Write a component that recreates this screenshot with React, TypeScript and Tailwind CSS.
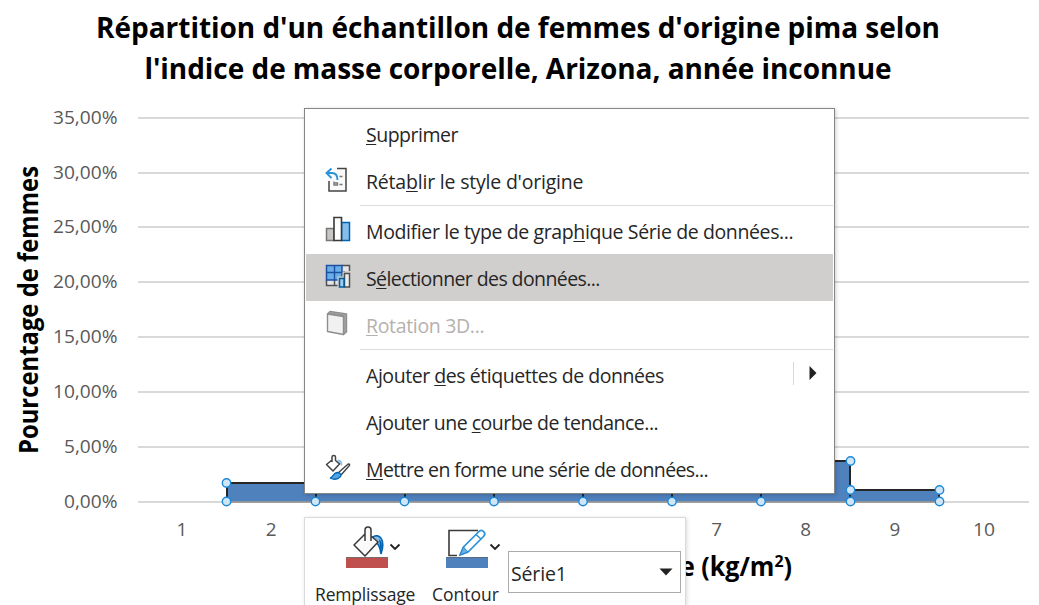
import React from "react";

const gridLines = [118, 173, 227, 282, 337, 392, 447, 502];
const percents = ["35,00%", "30,00%", "25,00%", "20,00%", "15,00%", "10,00%", "5,00%", "0,00%"];
const handles: [number, number][] = [
  [226.5, 483], [226.5, 501.5], [315.5, 501.5], [404.5, 501.5], [494, 501.5], [583, 501.5],
  [672, 501.5], [761, 501.5], [850.5, 461], [850.5, 490], [850.5, 501.5], [939.5, 490], [939.5, 501.5],
];

function Chart() {
  return (
    <svg className="block h-[515px] w-[1039px] font-['Open_Sans',sans-serif]" viewBox="0 90 1039 515">
      {gridLines.map((y) => (
        <path key={y} d={`M138 ${y}H1029`} stroke="#d9d9d9" strokeWidth="2" />
      ))}
      <g fill="#595959" fontSize="19">
        {percents.map((p, i) => (
          <text key={p} x={p.length === 6 ? 53 : 64} y={gridLines[i] + 6} textLength={p.length === 6 ? 64.5 : 53.5} lengthAdjust="spacingAndGlyphs">{p}</text>
        ))}
        {[1, 2, 3, 4, 5, 6, 7, 8, 9, 10].map((n) => (
          <text key={n} x={182 + (n - 1) * 89.1} y="536" textAnchor="middle" textLength={n === 10 ? 22 : 10.8} lengthAdjust="spacingAndGlyphs">{n}</text>
        ))}
      </g>
      <path d="M227 501.500V483H316V470H761V461H850V490H939V501.500Z" fill="#4f81bd" />
      <path d="M227 501V483H316V470H761V461H850V490H939V501M316 470V501M405 470V501M494 470V501M583 470V501M672 470V501M761 461V501M850 490V501" fill="none" stroke="#262626" strokeWidth="2" />
      <path d="M227 502H939" stroke="#8c8c8c" strokeWidth="1.500" />
      {handles.map(([x, y], i) => (
        <circle key={i} cx={x} cy={y} r="4.200" fill="#cfe6f8" stroke="#1e88d8" strokeWidth="1.400" />
      ))}
      <g fill="#000" fontWeight="700" fontSize="26">
        <text transform="translate(38 454) rotate(-90)" textLength="288" lengthAdjust="spacingAndGlyphs">Pourcentage de femmes</text>
        <text x="680" y="576" textLength="112" lengthAdjust="spacingAndGlyphs">e (kg/m<tspan dy="-9" fontSize="16.500">2</tspan><tspan dy="9">)</tspan></text>
      </g>
    </svg>
  );
}

function ResetIcon() {
  return (
    <svg className="-mt-[3px]" width="26" height="26" viewBox="0 0 26 26" fill="none">
      <path d="M11 3H21V25H4V15" fill="#fafafa" />
      <path d="M12 2.500H21V25H4V15" stroke="#444" strokeWidth="1.500" />
      <path d="M14.500 10.500H17.500M14.500 18.500H17.500" stroke="#777" strokeWidth="1.500" />
      <path d="M9 15.500V19H12.500V17H9" stroke="#777" strokeWidth="1.300" />
      <path d="M6.500 2.500L1.500 7L6.500 12M2 7H7C11 7 12.500 10 12.500 14" stroke="#2b91d9" strokeWidth="1.900" />
    </svg>
  );
}

function ColumnsIcon() {
  return (
    <svg width="26" height="26" viewBox="0 0 26 26">
      <path d="M1.500 12.500H9V24.500H1.500Z" fill="#c8c6c4" stroke="#797775" strokeWidth="1.500" />
      <path d="M16.500 6.500H24.500V24.500H16.500Z" fill="#83beec" stroke="#0063b1" strokeWidth="1.500" />
      <path d="M9 1.500H16.500V24.500H9Z" fill="#fff" stroke="#3b3a39" strokeWidth="1.600" />
    </svg>
  );
}

function SelectDataIcon() {
  return (
    <svg width="26" height="26" viewBox="0 0 26 26" fill="none">
      <path d="M1.500 17H17V22.500H1.500ZM17 2.500H24.500V8H17Z" fill="#e5e5e5" />
      <path d="M1.500 17V22.500H13M9.500 17V22.500M17 2.500H24.500V8M17 9H20" stroke="#505050" strokeWidth="1.500" />
      <path d="M1.500 2.500H17V17H1.500Z" fill="#69afe5" stroke="#1d4fa3" strokeWidth="1.500" />
      <path d="M9.500 2V17M1 9.500H17" stroke="#1d4fa3" strokeWidth="1.400" />
      <path d="M12.500 13.500H17.500V8.500H21V25H12.500Z" fill="#d0cfcd" />
      <path d="M19.500 10.500H24.500V24H19.500Z" fill="#eee" stroke="#505050" strokeWidth="1.500" />
      <path d="M14.500 15.500H19V24H14.500Z" fill="#9cccf1" stroke="#005b9e" strokeWidth="1.500" />
    </svg>
  );
}

function CubeIcon() {
  return (
    <svg width="26" height="26" viewBox="0 0 26 26" stroke="#8e8e8e" strokeWidth="1.400" strokeLinejoin="round">
      <path d="M2.500 4L5 1.500L21.500 4V22L18.500 24.500V6Z" fill="#bdbdbd" />
      <path d="M4 3L20 5V23" fill="none" stroke="#999" />
      <path d="M2.500 4L18.500 6.500V24.500L2.500 21.500Z" fill="#f1f1f1" />
    </svg>
  );
}

function FormatIcon() {
  return (
    <svg width="26" height="26" viewBox="0 0 26 26" fill="none">
      <path d="M12 6C16 5 18 8 17 12L14 9" fill="#8ec5ee" />
      <path d="M7 6L1.500 10.500L8 17L14.500 10L10.500 6.500V3C10.500 1 7 1 7 3V8" fill="#fff" stroke="#444" strokeWidth="1.500" strokeLinejoin="round" />
      <path d="M13 19L22 11C24 9 25.500 10.500 24 12L16 21" fill="#fff" stroke="#444" strokeWidth="1.400" />
      <path d="M5 24C8 24 8 19 12 18.500C16 18.500 17 21.500 14.500 23.500C12 25.500 8 25.500 5 24Z" fill="#53a5e2" stroke="#0063b1" strokeWidth="1.300" />
    </svg>
  );
}

function Item({ before = "", hot, after, icon, className = "text-[#262626]", tracking, arrow }: {
  before?: string; hot: string; after: string; icon?: React.ReactNode; className?: string; tracking: string; arrow?: boolean;
}) {
  return (
    <div className={`flex h-[47px] items-center pl-[19px] ${className}`}>
      <div className="-mt-[3px] mr-[15px] w-[26px] shrink-0">{icon}</div>
      <div className={`grow whitespace-pre text-[19.5px] ${tracking}`}>
        {before}<span className="underline decoration-1 underline-offset-[2px]">{hot}</span>{after}
      </div>
      {arrow && (
        <div className="-mt-[3px] flex h-[23px] w-[40px] items-center border-l border-[#d8d8d8] pl-[15px]">
          <svg width="8" height="14" viewBox="0 0 8 14"><path d="M0.500 0L7.500 7L0.500 14Z" fill="#222" /></svg>
        </div>
      )}
    </div>
  );
}

function ContextMenu() {
  return (
    <div className="absolute left-[304px] top-[108px] h-[386px] w-[531px] border border-[#858585] bg-white px-px pt-[2px] font-['Open_Sans',sans-serif] shadow-[1px_1px_4px_rgba(0,0,0,0.2)]">
      <Item hot="S" after="upprimer" tracking="pt-px tracking-[-0.5px]" />
      <Item before="Réta" hot="b" after="lir le style d'origine" icon={<ResetIcon />} tracking="pt-px tracking-[-0.2px]" />
      <div className="mb-px ml-[54px] h-px bg-[#dcdcdc]" />
      <Item before="Modifier le type de grap" hot="h" after="ique Série de données..." icon={<ColumnsIcon />} tracking="pt-[3px] tracking-[-0.38px]" />
      <Item before="S" hot="é" after="lectionner des données..." icon={<SelectDataIcon />} className="bg-[#d0cfcd] text-[#262626]" tracking="pt-[3px] tracking-[-0.59px]" />
      <Item hot="R" after="otation 3D..." icon={<CubeIcon />} className="text-[#b5b1ae]" tracking="pt-[3px] tracking-[-0.33px]" />
      <div className="my-px ml-[54px] h-px bg-[#dcdcdc]" />
      <Item before="Ajouter " hot="d" after="es étiquettes de données" tracking="pt-[3px] tracking-[-0.45px]" arrow />
      <Item before="Ajouter une " hot="c" after="ourbe de tendance..." tracking="pt-[3px] tracking-[-0.51px]" />
      <Item hot="M" after="ettre en forme une série de données..." icon={<FormatIcon />} tracking="pt-[3px] tracking-[-0.61px]" />
    </div>
  );
}

function Chevron() {
  return (
    <svg width="12" height="8" viewBox="0 0 12 8" fill="none"><path d="M1.500 1.500L6 6L10.500 1.500" stroke="#222" strokeWidth="1.900" /></svg>
  );
}

function MiniToolbar() {
  return (
    <div className="absolute left-[304px] top-[517px] flex h-[88px] w-[382px] overflow-hidden border border-b-0 border-[#dadada] bg-white pt-[7px] font-['Open_Sans',sans-serif] text-[17.5px] text-[#262626] shadow-[1px_1px_4px_rgba(0,0,0,0.15)]">
      <div className="ml-[10px] w-[117px] shrink-0">
        <div className="ml-[31px] flex items-center gap-[1px]">
          <svg width="42" height="43" viewBox="0 0 42 43" fill="none">
            <path d="M27 12C33 8 40 14 35 29C34 21 32 18 27 15Z" fill="#83beec" stroke="#0063b1" strokeWidth="1.600" />
            <path d="M33 14C37 17 36 22 35 29C34 24 34 20 33 14Z" fill="#0063b1" />
            <path d="M19 9L8 20L19 31L32 17L25 11V5C25 1 19 1 19 5V16" fill="#fafafa" />
            <path d="M19 9L8 20L19 31L32 17L25 11M19 16V5C19 1 25 1 25 5V16" stroke="#3b3a39" strokeWidth="1.500" strokeLinejoin="round" />
            <path d="M0 32H42V43H0Z" fill="#c0504d" /><path d="M0 32.500H42" stroke="#7a6b6a" />
          </svg>
          <Chevron />
        </div>
        <div className="mt-[15px] whitespace-nowrap leading-[22px] tracking-[-0.17px]">Remplissage</div>
      </div>
      <div className="w-[76px] shrink-0">
        <div className="ml-[14px] flex items-center gap-[1px]">
          <svg width="42" height="43" viewBox="0 0 42 43" fill="none">
            <path d="M32 5.500H3V30.500H11" stroke="#3b3a39" strokeWidth="1.600" />
            <path d="M14 30L17.500 22L33 6.500C36 3.500 41 8 37.500 11.500L22 27Z" fill="#fff" stroke="#2b91d9" strokeWidth="1.700" />
            <path d="M14 30L17.500 22L22 27Z" fill="#69afe5" stroke="#2b82c9" /><path d="M30 9.500L35 14" stroke="#2b91d9" strokeWidth="1.500" />
            <path d="M0 32H42V43H0Z" fill="#4f81bd" /><path d="M0 32.500H42" stroke="#596b80" />
          </svg>
          <Chevron />
        </div>
        <div className="mt-[15px] whitespace-nowrap leading-[22px]">Contour</div>
      </div>
      <div className="mt-[26px] flex h-[42px] w-[173px] shrink-0 items-center justify-between border border-[#ababab] pl-[2px] pr-[7px] text-[19.5px]">
        <span className="pt-[3px] tracking-[-0.15px]">Série1</span>
        <svg width="14" height="8" viewBox="0 0 14 8"><path d="M0.500 0.500H13.500L7 7.500Z" fill="#222" /></svg>
      </div>
    </div>
  );
}

export default function App() {
  return (
    <main className="relative h-[605px] w-[1039px] overflow-hidden bg-white">
      <h1 className="flex h-[90px] flex-col items-center pr-[3px] pt-[7px] text-center font-['Open_Sans',sans-serif] text-[28px] font-bold leading-[41px] tracking-[-0.04px] text-black">
        <span className="whitespace-nowrap">Répartition d'un échantillon de femmes d'origine pima selon</span>
        <span className="whitespace-nowrap">l'indice de masse corporelle, Arizona, année inconnue</span>
      </h1>
      <Chart />
      <ContextMenu />
      <MiniToolbar />
    </main>
  );
}
